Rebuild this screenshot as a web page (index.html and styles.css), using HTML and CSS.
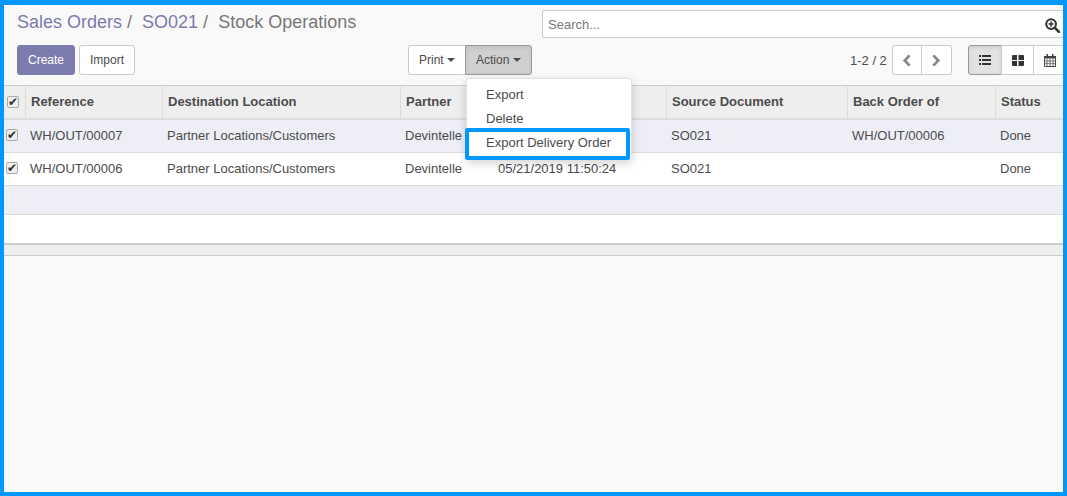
FILE: index.html
```html
<!DOCTYPE html>
<html lang="en">
<head>
<meta charset="UTF-8">
<meta name="viewport" content="width=device-width, initial-scale=1.0">
<title>Stock Operations</title>
<link rel="stylesheet" href="styles.css">
</head>
<body>
<div class="frame">

  <div class="panel">
    <div class="top">
      <ol class="crumbs">
        <li><a href="#">Sales Orders</a> /</li>
        <li><a href="#">SO021</a> /</li>
        <li class="current">Stock Operations</li>
      </ol>
      <div class="search">
        <span class="search-text">Search...</span>
        <svg class="search-icon" viewBox="0 0 16 16" width="15" height="15">
          <circle cx="6.500" cy="6.500" r="5.200" fill="none" stroke="#333" stroke-width="2.200"/>
          <path d="M10.600 10.600l4.200 4.200" stroke="#333" stroke-width="2.800" stroke-linecap="round"/>
          <path d="M6.500 3.800v5.400M3.800 6.500h5.400" stroke="#333" stroke-width="1.600"/>
        </svg>
      </div>
    </div>

    <div class="bottom">
      <div class="main-btns">
        <button class="btn primary">Create</button>
        <button class="btn">Import</button>
      </div>
      <div class="sidebar-btns">
        <div class="group">
          <button class="btn">Print <i class="caret"></i></button>
          <button class="btn pressed">Action <i class="caret"></i></button>
        </div>
        <ul class="menu">
          <li>Export</li>
          <li>Delete</li>
          <li class="marked">Export Delivery Order</li>
        </ul>
      </div>
      <div class="pager">
        <span class="pager-value">1-2 / 2</span>
        <div class="group">
          <button class="btn icon-btn">
            <svg viewBox="0 0 10 14" width="10" height="13"><path d="M7.800 1.500L2.600 7l5.200 5.500" fill="none" stroke="#888" stroke-width="3"/></svg>
          </button>
          <button class="btn icon-btn">
            <svg viewBox="0 0 10 14" width="10" height="13"><path d="M2.200 1.500L7.400 7l-5.200 5.500" fill="none" stroke="#888" stroke-width="3"/></svg>
          </button>
        </div>
      </div>
      <div class="views group">
        <button class="btn view-btn pressed">
          <svg viewBox="0 0 12 10" width="12" height="10" fill="#333"><path d="M0 0h2v2H0zM3 0h9v2H3zM0 4h2v2H0zM3 4h9v2H3zM0 8h2v2H0zM3 8h9v2H3z"/></svg>
        </button>
        <button class="btn view-btn">
          <svg viewBox="0 0 12 11" width="12" height="11" fill="#333"><path d="M0 1q0-1 1-1h4v5H0zM6.500 0H11q1 0 1 1v4H6.500zM0 6h5v5H1q-1 0-1-1zM6.500 6H12v4q0 1-1 1H6.500z"/></svg>
        </button>
        <button class="btn view-btn">
          <svg viewBox="0 0 12 13" width="12" height="13"><path d="M.5 2.500h11v10H.5z" fill="none" stroke="#444"/><path d="M0 2h12v2.500H0zM2.500 0h1.500v2.500H2.500zM8 0h1.500v2.500H8z" fill="#444"/><path d="M0 7h12M0 9.700h12M3 4.500v8M6 4.500v8M9 4.500v8" stroke="#555" stroke-width=".8"/></svg>
        </button>
      </div>
    </div>
  </div>

  <table class="list">
    <colgroup>
      <col class="c-check"><col class="c-ref"><col class="c-dest"><col class="c-partner">
      <col class="c-date"><col class="c-source"><col class="c-back"><col class="c-status">
    </colgroup>
    <thead>
      <tr>
        <th><span class="check head-check"></span></th>
        <th>Reference</th>
        <th>Destination Location</th>
        <th>Partner</th>
        <th></th>
        <th>Source Document</th>
        <th>Back Order of</th>
        <th>Status</th>
      </tr>
    </thead>
    <tbody>
      <tr>
        <td><span class="check"></span></td>
        <td>WH/OUT/00007</td>
        <td>Partner Locations/Customers</td>
        <td>Devintelle</td>
        <td></td>
        <td>SO021</td>
        <td>WH/OUT/00006</td>
        <td>Done</td>
      </tr>
      <tr>
        <td><span class="check"></span></td>
        <td>WH/OUT/00006</td>
        <td>Partner Locations/Customers</td>
        <td>Devintelle</td>
        <td>05/21/2019 11:50:24</td>
        <td>SO021</td>
        <td></td>
        <td>Done</td>
      </tr>
      <tr class="empty"><td colspan="8"></td></tr>
      <tr class="empty last"><td colspan="8"></td></tr>
    </tbody>
  </table>
  <div class="list-foot"></div>

</div>
</body>
</html>
```

FILE: styles.css
```css
*, *::before, *::after { box-sizing: border-box; }
html, body { margin: 0; height: 100%; }
body { font-family: "Liberation Sans", Arial, sans-serif; font-size: 13px; color: #4c4c4c; overflow: hidden; }

.frame {
  height: 496px; overflow: hidden;
  border: solid #0098ff; border-width: 5px 4px 4px;
  background: #f9f9f9;
}

/* control panel */
.panel { height: 80px; padding: 5px 0 0 13px; }
.top { display: flex; justify-content: space-between; height: 35px; }
.crumbs { display: flex; gap: 10px; margin: 0; padding: 2px 0 0; list-style: none; font-size: 18px; line-height: 20px; color: #777; }
.crumbs a { color: #7c7bad; text-decoration: none; }
.crumbs .current { color: #777; }

.search {
  display: flex; justify-content: space-between; align-items: center;
  width: 521px; height: 28px; padding: 0 3px 0 5px;
  background: #fff; border: 1px solid #ccc; border-right: none;
  border-radius: 3px 0 0 3px;
}
.search-text { color: #777; font-size: 13px; }
.search-icon { margin-top: 2px; }

.bottom { display: flex; align-items: flex-start; }
.main-btns { display: flex; gap: 4px; flex: none; width: 391px; }
.sidebar-btns { position: relative; flex: none; width: 442px; }
.pager { display: flex; align-items: center; gap: 5px; flex: none; width: 118px; }
.pager-value { font-size: 13px; color: #4c4c4c; }

.btn {
  height: 30px; padding: 0 10px; margin: 0;
  font-family: inherit; font-size: 12px; color: #4c4c4c;
  background: #fff; border: 1px solid #ccc; border-radius: 3px;
}
.btn.primary { width: 58px; padding: 0; color: #fff; background: #7c7bad; border-color: #7c7bad; }
.btn.pressed { background: #d0d0d0; border-color: #999; box-shadow: inset 0 2px 4px rgba(0,0,0,.08); }
.main-btns .btn:last-child { width: 56px; padding: 0; }

.group { display: inline-flex; }
.group .btn { border-radius: 0; }
.group .btn + .btn { margin-left: -1px; }
.group .btn:first-child { border-radius: 3px 0 0 3px; }
.group .btn:last-child { border-radius: 0 3px 3px 0; }
.icon-btn { width: 30px; padding: 0; display: flex; align-items: center; justify-content: center; }
.icon-btn + .icon-btn { width: 31px; }
.view-btn { width: 34px; padding: 0; display: flex; align-items: center; justify-content: center; }
.view-btn + .view-btn { width: 33px; }
.views { flex: none; }
.views .view-btn.pressed { background: #e2e2e2; }

.caret {
  display: inline-block; vertical-align: 2px;
  border-top: 4px solid #4c4c4c; border-left: 4px solid transparent; border-right: 4px solid transparent;
}

/* dropdown over the list */
.menu {
  position: absolute; left: 58px; top: 33px; z-index: 5;
  width: 166px; height: 82px; margin: 0; padding: 5px 0 0; list-style: none;
  background: #fff; border: 1px solid #e2e2e2; border-radius: 3px;
  box-shadow: 0 3px 10px rgba(0,0,0,.18);
}
.menu li { position: relative; height: 24px; line-height: 22px; padding-left: 19px; }
.menu .marked::after {
  content: ""; position: absolute; left: -2px; top: -4px;
  width: 165px; height: 32px;
  border: 4px solid #0098ff; border-radius: 2px;
}

/* list */
.list { width: 1059px; table-layout: fixed; border-collapse: separate; border-spacing: 0; background: #fff; }
.c-check { width: 21px; }
.c-ref { width: 137px; }
.c-dest { width: 238px; }
.c-partner { width: 93px; }
.c-date { width: 173px; }
.c-source { width: 181px; }
.c-back { width: 148px; }
.c-status { width: 68px; }

.list th {
  height: 35px; padding: 0 5px 1px; text-align: left; font-weight: 700; white-space: nowrap;
  background: #eee; border-top: 1px solid #ccc; border-bottom: 2px solid #ddd; border-left: 1px solid #ddd;
}
.list th:first-child { border-left: none; padding: 0 0 1px; }
.list td { height: 33px; padding: 0 5px 2px; white-space: nowrap; border-bottom: 1px solid #ddd; }
.list td:first-child { padding: 0 0 2px 2px; }
.list tbody tr:nth-child(odd) { background: #eeeef7; }
.list .empty td { height: 29px; }
.list .last td { height: 28px; border-bottom: none; }

.check {
  display: block; width: 12px; height: 12px;
  font: bold 12px/10px "DejaVu Sans", sans-serif; color: #333; text-align: center;
  background: #eee; border: 1px solid #aaa; border-radius: 2px;
}
.check::after { content: "\2714"; }
.head-check { margin-left: 3px; }

.list-foot { height: 13px; background: #eee; border-top: 2px solid #ccc; border-bottom: 1px solid #ccc; }
```
